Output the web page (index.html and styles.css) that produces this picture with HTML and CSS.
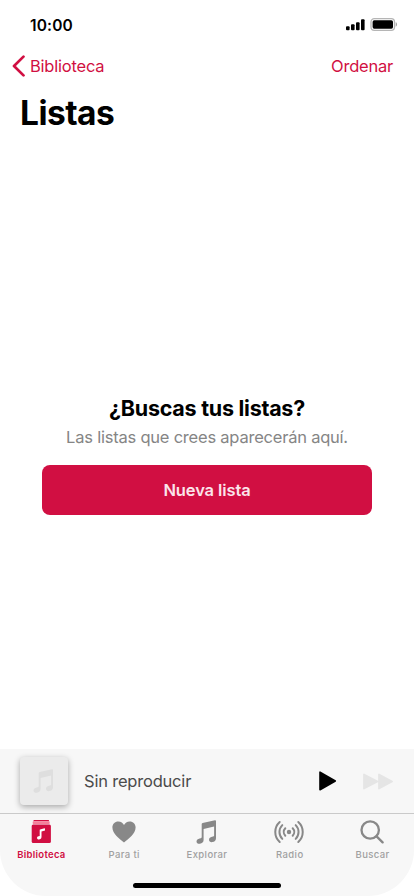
FILE: index.html
```html
<!DOCTYPE html>
<html lang="es">
<head>
<meta charset="utf-8">
<meta name="viewport" content="width=device-width, initial-scale=1">
<title>Listas</title>
<link rel="stylesheet" href="styles.css">
</head>
<body>
<svg width="0" height="0" class="defs" aria-hidden="true">
  <symbol id="note" viewBox="0 0 22 24">
    <path d="M7.600 3 20 .3c.6-.1 1 .2 1 .8v17.200c0 2.300-1.500 3.500-3.700 3.800-2 .2-3.300-.8-3.300-2.400 0-1.700 1.300-2.600 3-3l1.200-.3c.7-.2.9-.5.9-1.200V6.500L8.600 8.900v11.200c0 2.200-1.500 3.400-3.700 3.700-2 .2-3.400-.7-3.400-2.300 0-1.700 1.300-2.700 3.100-3.100l1.200-.2c.6-.2.9-.5.9-1.200V4.100c0-.6.3-.9.9-1.100Z"/>
  </symbol>
</svg>
<div class="screen">
  <header class="status">
    <span class="time">10:00</span>
    <svg class="signals" width="52" height="14" viewBox="0 0 52 14">
      <rect x="0" y="8.200" width="3.600" height="4" rx="1"/>
      <rect x="5" y="6.200" width="3.600" height="6" rx="1"/>
      <rect x="10" y="4.200" width="3.600" height="8" rx="1"/>
      <rect x="15" y="1.200" width="3.600" height="11" rx="1"/>
      <rect x="25" y=".7" width="23.500" height="11.600" rx="3.300" fill="#fff" stroke="#b5b5b5" stroke-width="1.300"/>
      <rect x="26.600" y="2.300" width="20.400" height="8.400" rx="1.600"/>
      <path d="M49.700 4.300c1.800.4 1.800 4 0 4.400Z" fill="#a5a5a5"/>
    </svg>
  </header>
  <nav class="nav">
    <a class="back">
      <svg width="13" height="22" viewBox="0 0 13 22"><path d="M11.500 1.600 2 11l9.500 9.400" fill="none" stroke="currentColor" stroke-width="2.700" stroke-linecap="round" stroke-linejoin="round"/></svg>
      <span class="back-label">Biblioteca</span>
    </a>
    <a class="sort">Ordenar</a>
  </nav>
  <h1>Listas</h1>
  <main>
    <h2>¿Buscas tus listas?</h2>
    <p>Las listas que crees aparecerán aquí.</p>
    <button>Nueva lista</button>
  </main>
  <section class="player">
    <div class="cover"><svg width="22" height="24"><use href="#note"/></svg></div>
    <span class="track">Sin reproducir</span>
    <svg class="play" width="18" height="20" viewBox="0 0 18 20"><path d="M1 1.200v17.600l15.300-8.800Z" stroke="currentColor" stroke-width="1.600" stroke-linejoin="round" fill="currentColor"/></svg>
    <svg class="forward" width="30" height="17" viewBox="0 0 30 17"><path d="M1 1.500v14L14.500 8.500ZM16 1.500v14L29 8.500Z" stroke="currentColor" stroke-width="1.800" stroke-linejoin="round" fill="currentColor"/></svg>
  </section>
  <footer class="tabs">
    <a class="tab active">
      <svg width="30" height="24" viewBox="0 0 30 24"><path d="M8 0h14.500a.5.500 0 0 1 .5.500V1.300H7.500V.5A.5.500 0 0 1 8 0Z" fill="currentColor"/><rect x="6.700" y="1.300" width="17" height="2.600" rx=".7" fill="#f5809c"/><rect x="5.700" y="4.500" width="19.200" height="18.600" rx="1.500" fill="currentColor"/><path d="m14.100 9.600 4.300-1.300c.4-.1.600.1.600.5v1.600l-3.500 1.200v5.200c0 1.800-1 2.600-2.600 2.600-1.200 0-1.900-.6-1.900-1.500 0-1.300 1.200-1.800 2.700-1.900v-5.700c0-.4 0-.6.400-.7Z" fill="#fff"/></svg>
      <span>Biblioteca</span>
    </a>
    <a class="tab">
      <svg width="24" height="24" viewBox="0 0 24 24"><path d="M12 22.500C7.500 19.200.4 13.600.4 7.600.4 3.900 2.900 1.400 6.300 1.400 9 1.400 11 2.900 12 5c1-2.100 3-3.600 5.700-3.600 3.400 0 5.900 2.500 5.900 6.200 0 6-7.100 11.600-11.600 14.900Z" fill="currentColor"/></svg>
      <span>Para ti</span>
    </a>
    <a class="tab">
      <svg class="shift" width="22" height="24" fill="currentColor"><use href="#note"/></svg>
      <span>Explorar</span>
    </a>
    <a class="tab">
      <svg class="shift" width="30" height="24" viewBox="0 0 30 24" fill="none" stroke="currentColor" stroke-width="2" stroke-linecap="round"><circle cx="15" cy="12" r="2.200" fill="currentColor" stroke="none"/><path d="M11.300 8.300a5.300 5.300 0 0 0 0 7.400M18.700 8.300a5.300 5.300 0 0 1 0 7.400M8.300 5.100a9.800 9.800 0 0 0 0 13.800M21.700 5.100a9.800 9.800 0 0 1 0 13.800M5.700 2a13.500 13.500 0 0 0 0 20M24.300 2a13.500 13.500 0 0 1 0 20"/></svg>
      <span>Radio</span>
    </a>
    <a class="tab">
      <svg class="shift" width="24" height="24" viewBox="0 0 24 24" fill="none" stroke="currentColor" stroke-width="2.300" stroke-linecap="round"><circle cx="10.200" cy="10" r="8.700"/><path d="m16.600 16.400 6 6"/></svg>
      <span>Buscar</span>
    </a>
    <div class="home"></div>
  </footer>
</div>
</body>
</html>
```
FILE: styles.css
```css
* { box-sizing: border-box; }
body { margin: 0; background: #fff; font-family: Inter, "Liberation Sans", sans-serif; color: #000; }
.defs { position: absolute; }
.screen { width: 414px; height: 896px; display: flex; flex-direction: column; overflow: hidden; }
.screen svg { display: block; flex: none; }
.status { height: 48px; padding: 0 16px 0 30px; display: flex; justify-content: space-between; align-items: center; }
.time { font-size: 15.5px; font-weight: 600; line-height: 20px; padding-top: 4px; letter-spacing: .15px; }
.signals { margin-top: 1px; }
.nav { height: 36px; padding: 0 21px 0 12px; display: flex; justify-content: space-between; align-items: center; color: #d10f42; font-size: 16.5px; line-height: 20px; letter-spacing: -.22px; }
.back { display: flex; align-items: center; gap: 5px; }
h1 { margin: 0; height: 56px; padding-left: 20px; font-size: 33.5px; line-height: 58px; letter-spacing: -.55px; font-weight: 700; }
main { flex: 1; padding: 254px 42px 0; text-align: center; }
h2 { margin: 0; font-size: 21.5px; line-height: 28px; font-weight: 700; letter-spacing: -.26px; }
p { margin: 0; color: #858585; font-size: 16.5px; line-height: 31px; letter-spacing: -.22px; }
button { display: block; width: 330px; height: 50px; margin: 12px 0 0; border: 0; border-radius: 8px; background: #d10f42; color: #fbe4ea; font: 600 16.5px/51px Inter, sans-serif; letter-spacing: -.1px; padding: 0; }
.player { height: 64px; background: #f7f7f7; display: flex; align-items: center; padding: 0 21px 0 20px; }
.cover { width: 48px; height: 48px; border-radius: 4px; background: #ebebeb; box-shadow: 0 2px 6px rgba(0,0,0,.32); display: flex; align-items: center; justify-content: center; fill: #dedede; }
.cover svg { margin-right: 3px; }
.track { margin-left: 16px; font-size: 16.5px; color: #4b4b4b; letter-spacing: -.2px; }
.play { margin: -1px 0 0 auto; }
.forward { margin: 0 0 0 26px; color: #e5e5e5; }
.tabs { position: relative; height: 83px; background: #f7f7f7; border-top: 1px solid #cacaca; border-radius: 0 0 46px 46px; display: grid; grid-template-columns: repeat(5, 1fr); padding-top: 6px; }
.tab { display: flex; flex-direction: column; align-items: center; color: #888; }
.tab .shift { margin-right: 2px; }
.tab span { margin-top: 4px; font-size: 9.5px; line-height: 13px; font-weight: 500; letter-spacing: .4px; color: #a0a0a0; }
.tab.active, .tab.active span { color: #d10f42; }
.tab.active span { font-weight: 600; letter-spacing: .3px; }
.home { position: absolute; left: 133px; bottom: 8px; width: 148px; height: 5px; border-radius: 3px; background: #000; }
```
